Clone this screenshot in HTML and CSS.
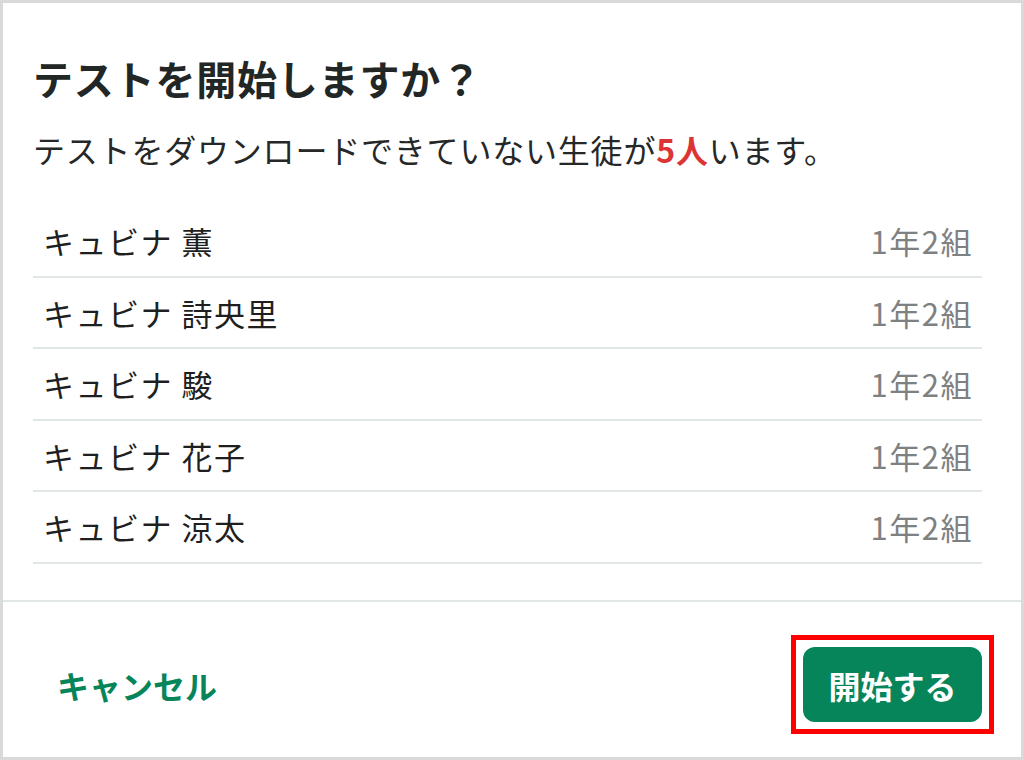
FILE: index.html
```html
<!DOCTYPE html>
<html lang="ja">
<head>
<meta charset="utf-8">
<title>テストを開始しますか？</title>
<link rel="stylesheet" href="styles.css">
</head>
<body>
<div class="dialog">
  <div class="body">
    <h1 class="title">テストを開始しますか？</h1>
    <p class="lead">テストをダウンロードできていない生徒が<strong class="count">5人</strong>います。</p>
    <ul class="list">
      <li class="row"><span class="name">キュビナ 薫</span><span class="cls">1年2組</span></li>
      <li class="row"><span class="name">キュビナ 詩央里</span><span class="cls">1年2組</span></li>
      <li class="row"><span class="name">キュビナ 駿</span><span class="cls">1年2組</span></li>
      <li class="row"><span class="name">キュビナ 花子</span><span class="cls">1年2組</span></li>
      <li class="row"><span class="name">キュビナ 涼太</span><span class="cls">1年2組</span></li>
    </ul>
  </div>
  <div class="footer">
    <button class="btn-text">キャンセル</button>
    <span class="highlight"><button class="btn-primary">開始する</button></span>
  </div>
</div>
</body>
</html>
```

FILE: styles.css
```css
html, body {
  margin: 0;
  padding: 0;
  background: #ffffff;
}
body {
  width: 1024px;
  height: 760px;
  font-family: "Noto Sans CJK JP", "Noto Sans", sans-serif;
  color: #262626;
}
.dialog {
  box-sizing: border-box;
  width: 1024px;
  height: 760px;
  border: 3px solid #dadada;
  display: flex;
  flex-direction: column;
}
.body {
  padding: 51px 39px 36px 30px;
}
.title {
  margin: 0;
  font-size: 40px;
  line-height: 48px;
  font-weight: 700;
  letter-spacing: 0.8px;
  color: #222625;
}
.lead {
  margin: 25px 0 35px 0;
  font-size: 32px;
  line-height: 44px;
  letter-spacing: 0.8px;
  color: #262828;
}
.count {
  color: #dc3535;
  font-weight: 700;
}
.list {
  list-style: none;
  margin: 0;
  padding: 0;
}
.row {
  box-sizing: border-box;
  height: 71.5px;
  border-bottom: 2px solid #e1e6e6;
  display: flex;
  justify-content: space-between;
  align-items: center;
  padding: 0 9px 0 10px;
  font-size: 31px;
  letter-spacing: 1.5px;
}
.name {
  color: #1f1f1f;
}
.cls {
  color: #7d8181;
}
.footer {
  flex: 1;
  border-top: 2px solid #e1e6e6;
  display: flex;
  justify-content: space-between;
  align-items: center;
  padding: 11px 27px 0 28px;
}
.btn-text, .btn-primary {
  font-family: "Noto Sans CJK JP", "Noto Sans", sans-serif;
  font-size: 32px;
  font-weight: 700;
  border: none;
  cursor: pointer;
}
.btn-text {
  background: transparent;
  color: #07855a;
  padding: 0 26px;
  height: 75px;
}
.highlight {
  display: flex;
  border: 5px solid #ff0000;
  padding: 7px;
}
.btn-primary {
  background: #07855a;
  color: #ffffff;
  width: 179px;
  height: 75px;
  border-radius: 12px;
}
```
